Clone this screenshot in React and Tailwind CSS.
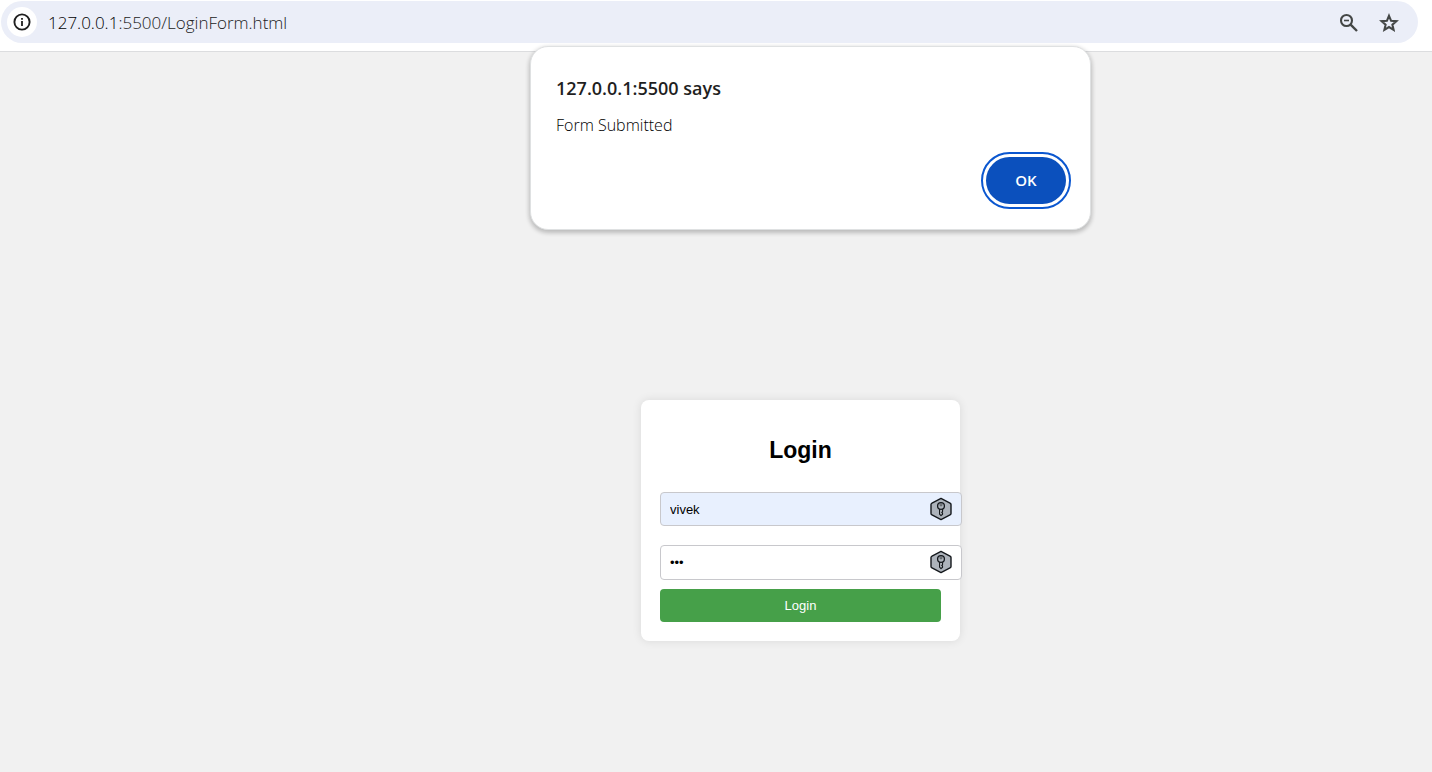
function InfoIcon() {
  return (
    <svg className="size-5" viewBox="0 0 20 20" fill="none" stroke="currentColor" aria-hidden="true">
      <circle cx="10" cy="10" r="7.6" strokeWidth="1.9" />
      <path d="M10 9v5" strokeWidth="1.8" />
      <path d="M10 6v1.8" strokeWidth="1.8" />
    </svg>
  );
}

function ZoomOutIcon() {
  return (
    <svg className="size-6" viewBox="0 0 24 24" fill="none" stroke="currentColor" aria-hidden="true">
      <circle cx="9.5" cy="9.5" r="5.5" strokeWidth="2.1" />
      <path d="M7 9.5h5" strokeWidth="1.6" />
      <path d="M13.6 13.6l6.4 6.4" strokeWidth="2.4" />
    </svg>
  );
}

function StarIcon() {
  return (
    <svg className="size-6" viewBox="0 0 24 24" fill="none" stroke="currentColor" aria-hidden="true">
      <path
        d="M12 4.8 14.1 9.8 19.4 10.2 15.4 13.7 16.6 18.9 12 16.1 7.4 18.9 8.6 13.7 4.6 10.2 9.9 9.8Z"
        strokeWidth="2.1"
        strokeMiterlimit="10"
      />
    </svg>
  );
}

function KeyBadge() {
  return (
    <svg
      className="absolute right-[10px] top-[5px] h-[24px] w-[22px]"
      viewBox="0 0 22 24"
      fill="none"
      stroke="#14181c"
      aria-hidden="true"
    >
      <path
        d="M11 1.4 20 6.1Q21 6.6 21 7.6V16.4Q21 17.4 20 17.9L11 22.6 2 17.9Q1 17.4 1 16.4V7.6Q1 6.6 2 6.1Z"
        fill="#adb3bb"
        strokeWidth="1.4"
        strokeLinejoin="round"
      />
      <path
        d="M9.6 11.6V17.2L11 18.6 12.5 17.3V16.2L11.8 15.5 12.5 14.7V11.6"
        fill="#c5cad0"
        strokeWidth="1.2"
        strokeLinejoin="round"
      />
      <circle cx="11" cy="9" r="3.4" fill="#adb3bb" strokeWidth="1.3" />
      <circle cx="11" cy="7.9" r="1" fill="#eef0f2" strokeWidth="0.7" />
    </svg>
  );
}

function Field({ label, type, value, className }) {
  return (
    <div className="relative w-[calc(100%+21px)]">
      <input
        aria-label={label}
        type={type}
        defaultValue={value}
        className={`block w-full rounded-[4px] border border-[#c8c8cc] pl-[9px] pr-10 text-[13px] text-black outline-none ${className}`}
      />
      <KeyBadge />
    </div>
  );
}

function AddressBar() {
  return (
    <header className="border-b border-[#dcdddf] bg-white pb-2 pl-[1px] pr-[14px] pt-[1px]">
      <div className="flex h-[42px] items-center rounded-full bg-[#ebeef8] pl-[6px] pr-[17px]">
        <button
          type="button"
          aria-label="Site information"
          className="flex size-[30px] items-center justify-center rounded-full bg-white text-[#1f1f1f]"
        >
          <InfoIcon />
        </button>
        <p className="flex-1 pl-[11px] pt-[1px] font-['Open_Sans',sans-serif] text-[17px] font-light leading-6 text-[#222222]">
          <span className="text-black">127.0.0.1</span>:5500/LoginForm.html
        </p>
        <div className="flex gap-4 pt-[1px] text-[#444746]">
          <button type="button" aria-label="Zoom">
            <ZoomOutIcon />
          </button>
          <button type="button" aria-label="Bookmark this tab">
            <StarIcon />
          </button>
        </div>
      </div>
    </header>
  );
}

function AlertDialog() {
  return (
    <div className="absolute inset-x-0 top-[46px] flex justify-center pl-[189px]">
      <section
        role="alertdialog"
        aria-labelledby="alert-title"
        aria-describedby="alert-message"
        className="flex w-[561px] flex-col rounded-[18px] border border-[#dfe1e2] bg-white pb-[25px] pl-[25px] pr-6 pt-[29px] font-['Open_Sans',sans-serif] text-[#1f1f1f] shadow-[0_2px_4px_1px_rgba(0,0,0,0.22)]"
      >
        <h1 id="alert-title" className="text-[18px] font-semibold leading-6">
          127.0.0.1:5500 says
        </h1>
        <p id="alert-message" className="mt-[13px] text-[16px] font-light leading-6 text-black">
          Form Submitted
        </p>
        <button
          type="button"
          className="mt-5 h-[47px] w-20 self-end rounded-full bg-[#0b50bd] text-[15px] font-semibold text-white outline-2 outline-offset-[3px] outline-[#0b57d0]"
        >
          OK
        </button>
      </section>
    </div>
  );
}

export default function App() {
  return (
    <div className="relative flex min-h-screen flex-col bg-[#f1f1f1] font-['Liberation_Sans',Arial,sans-serif]">
      <AddressBar />
      <main className="flex flex-1 items-start justify-center pb-8 pl-[169px] pt-[348px]">
        <form
          onSubmit={(event) => event.preventDefault()}
          className="w-[319px] rounded-[8px] bg-white p-[19px] shadow-[0_0_10px_rgba(0,0,0,0.1)]"
        >
          <h2 className="mt-[17px] text-center text-[23px] font-bold leading-7 text-black">
            Login
          </h2>
          <div className="mt-7 flex flex-col gap-[19px]">
            <Field
              label="Username"
              type="text"
              value="vivek"
              className="h-[34px] bg-[#e8f0fe]"
            />
            <Field
              label="Password"
              type="password"
              value="abc"
              className="h-[35px] bg-white"
            />
          </div>
          <button
            type="submit"
            className="mt-[9px] h-[33px] w-full rounded-[4px] bg-[#46a049] text-[13px] text-white"
          >
            Login
          </button>
        </form>
      </main>
      <AlertDialog />
    </div>
  );
}
